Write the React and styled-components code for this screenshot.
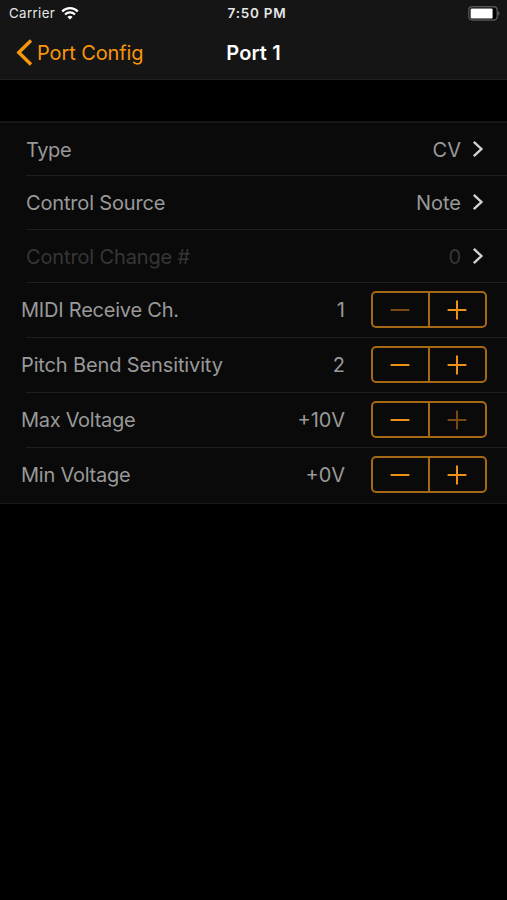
import React from 'react';
import styled, { createGlobalStyle } from 'styled-components';

const GlobalStyle = createGlobalStyle`
  * {
    box-sizing: border-box;
  }

  body {
    margin: 0;
    background: #000;
    font-family: Inter, 'Liberation Sans', sans-serif;
    -webkit-font-smoothing: antialiased;
  }
`;

const Screen = styled.div`
  width: 507px;
  height: 900px;
  background: #000;
  overflow: hidden;
`;

const Header = styled.header`
  height: 80px;
  background: #151515;
  border-bottom: 1px solid #202020;
`;

const StatusBar = styled.div`
  display: grid;
  grid-template-columns: 1fr auto 1fr;
  align-items: center;
  height: 27px;
  padding: 0 7px 0 9px;
  color: #e6e6e6;
  font-size: 13.3px;
  line-height: 27px;
`;

const Carrier = styled.div`
  display: flex;
  align-items: center;
  gap: 6px;
  letter-spacing: 0.36px;
`;

const Clock = styled.div`
  font-size: 13.5px;
  font-weight: 600;
  letter-spacing: 0.75px;
  padding-left: 5px;
`;

const Battery = styled.div`
  display: flex;
  justify-content: flex-end;
`;

const NavBar = styled.nav`
  display: grid;
  grid-template-columns: 1fr auto 1fr;
  align-items: center;
  height: 51px;
  padding: 0 16px;
`;

const BackButton = styled.button`
  display: flex;
  align-items: center;
  gap: 4px;
  padding: 0;
  border: 0;
  background: none;
  color: #f8960c;
  font-family: inherit;
  font-size: 20px;
  letter-spacing: -0.1px;
  white-space: nowrap;
  cursor: pointer;
`;

const Title = styled.h1`
  margin: 0;
  color: #fff;
  font-size: 20px;
  font-weight: 600;
  letter-spacing: 0.1px;
`;

const List = styled.ul`
  margin: 41px 0 0;
  padding: 0;
  list-style: none;
  background: #0a0a0a;
  border-top: 2px solid #171717;
  border-bottom: 1px solid #1b1b1b;
`;

const Row = styled.li`
  display: flex;
  align-items: center;
  height: ${({ $height }) => $height}px;
  padding: ${({ $padding }) => $padding};
  background: linear-gradient(#1e1e1e, #1e1e1e) 26px 100% / 100% 1px no-repeat;
  color: ${({ $disabled }) => ($disabled ? '#363636' : '#999')};
  font-size: 20px;
  line-height: 24px;

  &:last-child {
    background: none;
  }
`;

const Label = styled.span`
  flex: 1;
  letter-spacing: ${({ $spacing }) => $spacing}px;
  white-space: nowrap;
`;

const Value = styled.span`
  margin-right: ${({ $gap }) => $gap}px;
`;

const StepperBox = styled.div`
  display: grid;
  grid-template-columns: 55px 57px;
  width: 116px;
  height: 37px;
  border: 2px solid #a56814;
  border-radius: 5px;
`;

const StepButton = styled.button`
  display: flex;
  align-items: center;
  justify-content: center;
  padding: 0 1px 0 0;
  border: 0;
  background: none;
  color: ${({ disabled }) => (disabled ? '#764a10' : '#ee9119')};

  & + & {
    border-left: 2px solid #a56814;
  }
`;

const ChevronIcon = styled.svg`
  margin-bottom: 2px;
`;

const WifiIcon = () => (
  <svg width="18" height="13" viewBox="0 0 18 13" fill="none" stroke="#fff">
    <path d="M1.2 4.5 C5.6 .1 12.4 .1 16.8 4.5" strokeWidth="2.3" />
    <path d="M4 7.5 C6.9 4.6 11.1 4.6 14 7.5" strokeWidth="2.1" />
    <path d="M6.4 9.9 Q9 7.7 11.6 9.9 L9 12.5Z" fill="#fff" stroke="none" />
  </svg>
);

const BatteryIcon = () => (
  <svg width="32" height="15" viewBox="0 0 32 15">
    <rect x="0.8" y="0.8" width="28.4" height="13.2" rx="3.4" fill="#000" stroke="#555" strokeWidth="1.4" />
    <rect x="2.6" y="2.4" width="22" height="10" rx="1.2" fill="#fff" />
    <path d="M30.2 5 Q32.6 7.4 30.2 9.8Z" fill="#666" />
  </svg>
);

const BackIcon = () => (
  <svg width="17" height="27" viewBox="0 0 17 27" fill="none">
    <path d="M15 1.5 2.8 13.5 15 25.5" stroke="currentColor" strokeWidth="3.4" />
  </svg>
);

const Chevron = () => (
  <ChevronIcon width="13" height="18" viewBox="0 0 13 18" fill="none">
    <path d="M1.8 1.8 9.4 9 1.8 16.2" stroke="#d2d2d2" strokeWidth="2.4" />
  </ChevronIcon>
);

const StepIcon = ({ plus }) => (
  <svg width="20" height="20" viewBox="0 0 20 20" stroke="currentColor" strokeWidth="2">
    <path d={plus ? 'M.6 10H19.4M10 .6V19.4' : 'M.6 10H19.4'} />
  </svg>
);

const Stepper = ({ label, atMin, atMax }) => (
  <StepperBox>
    <StepButton disabled={atMin} aria-label={`Decrease ${label}`}>
      <StepIcon />
    </StepButton>
    <StepButton disabled={atMax} aria-label={`Increase ${label}`}>
      <StepIcon plus />
    </StepButton>
  </StepperBox>
);

const links = [
  { label: 'Type', value: 'CV', spacing: -0.4, height: 53 },
  { label: 'Control Source', value: 'Note', spacing: -0.17, height: 54 },
  { label: 'Control Change #', value: '0', spacing: -0.14, height: 53, disabled: true },
];

const steppers = [
  { label: 'MIDI Receive Ch.', value: '1', spacing: -0.22, atMin: true },
  { label: 'Pitch Bend Sensitivity', value: '2', spacing: -0.13 },
  { label: 'Max Voltage', value: '+10V', spacing: -0.3, atMax: true },
  { label: 'Min Voltage', value: '+0V', spacing: -0.24 },
];

export default function App() {
  return (
    <>
      <GlobalStyle />
      <Screen>
        <Header>
          <StatusBar>
            <Carrier>
              Carrier <WifiIcon />
            </Carrier>
            <Clock>7:50 PM</Clock>
            <Battery>
              <BatteryIcon />
            </Battery>
          </StatusBar>
          <NavBar>
            <BackButton>
              <BackIcon />
              Port Config
            </BackButton>
            <Title>Port 1</Title>
          </NavBar>
        </Header>
        <List>
          {links.map(({ label, value, spacing, height, disabled }) => (
            <Row key={label} $height={height} $padding="0 22px 0 26px" $disabled={disabled}>
              <Label $spacing={spacing}>{label}</Label>
              <Value $gap={11}>{value}</Value>
              <Chevron />
            </Row>
          ))}
          {steppers.map(({ label, value, spacing, atMin, atMax }) => (
            <Row key={label} $height={55} $padding="0 20px 2px 21px">
              <Label $spacing={spacing}>{label}</Label>
              <Value $gap={26}>{value}</Value>
              <Stepper label={label} atMin={atMin} atMax={atMax} />
            </Row>
          ))}
        </List>
      </Screen>
    </>
  );
}
